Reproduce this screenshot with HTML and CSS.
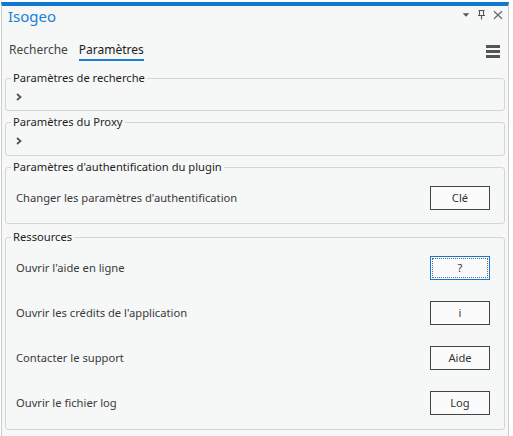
FILE: index.html
```html
<!DOCTYPE html>
<html lang="fr">
<head>
<meta charset="utf-8">
<title>Isogeo</title>
<link rel="stylesheet" href="styles.css">
</head>
<body>
<div class="panel">
  <div class="titlebar">
    <span class="title">Isogeo</span>
    <div class="win-icons">
      <svg class="ico ico-drop" width="10" height="10" viewBox="0 0 10 10"><path d="M1.7 3.3 L8.3 3.3 L5 6.7 Z" fill="#555"/></svg>
      <svg class="ico ico-pin" width="10" height="10" viewBox="0 0 10 10"><path d="M2.5 0.5 H8.5 M3.5 0.5 V5.5 M7.5 0.5 V5.5 M2 5.5 H9 M5.5 5.5 V9.5" stroke="#555" stroke-width="1.1" fill="none"/></svg>
      <svg class="ico ico-close" width="10" height="10" viewBox="0 0 10 10"><path d="M1 1.2 L9 8.8 M9 1.2 L1 8.8" stroke="#666" stroke-width="1.2" fill="none"/></svg>
    </div>
  </div>
  <div class="tabbar">
    <div class="tabs">
      <span class="tab">Recherche</span>
      <span class="tab active">Paramètres</span>
    </div>
    <svg class="menu" width="14" height="13" viewBox="0 0 14 13"><path d="M0 1.5 H14 M0 6.5 H14 M0 11.5 H14" stroke="#555" stroke-width="3"/></svg>
  </div>

  <fieldset class="group collapsed g1">
    <legend>Paramètres de recherche</legend>
    <svg class="chev" width="6" height="8" viewBox="0 0 6 8"><path d="M1 1 L4.5 4 L1 7" stroke="#555" stroke-width="1.8" fill="none"/></svg>
  </fieldset>

  <fieldset class="group collapsed g2">
    <legend>Paramètres du Proxy</legend>
    <svg class="chev" width="6" height="8" viewBox="0 0 6 8"><path d="M1 1 L4.5 4 L1 7" stroke="#555" stroke-width="1.8" fill="none"/></svg>
  </fieldset>

  <fieldset class="group g3">
    <legend>Paramètres d'authentification du plugin</legend>
    <div class="row"><span class="label">Changer les paramètres d'authentification</span><button class="btn">Clé</button></div>
  </fieldset>

  <fieldset class="group g4">
    <legend>Ressources</legend>
    <div class="row"><span class="label">Ouvrir l'aide en ligne</span><button class="btn focus">?</button></div>
    <div class="row"><span class="label">Ouvrir les crédits de l'application</span><button class="btn">i</button></div>
    <div class="row"><span class="label">Contacter le support</span><button class="btn">Aide</button></div>
    <div class="row"><span class="label">Ouvrir le fichier log</span><button class="btn">Log</button></div>
  </fieldset>
</div>
</body>
</html>
```

FILE: styles.css
```css
html, body {
  margin: 0;
  padding: 0;
  background: #ffffff;
  height: 100%;
  overflow: hidden;
}
body {
  font-family: "Noto Sans", "Open Sans", sans-serif;
  font-size: 11.2px;
  color: #333;
  padding-top: 2px;
  padding-left: 1px;
  box-sizing: border-box;
}
.panel {
  width: 502px;
  height: 440px;
  background: #f6f7f7;
  border-top: 4px solid #0f78d0;
  border-left: 1px solid #cbcbcb;
  border-right: 1px solid #cbcbcb;
  padding: 0 2px;
}
.titlebar {
  display: flex;
  justify-content: space-between;
  align-items: flex-start;
  height: 34px;
}
.title {
  color: #1a7fd4;
  font-size: 15px;
  line-height: 20px;
  margin-left: 4px;
}
.win-icons {
  display: flex;
  align-items: center;
  margin-top: 4px;
  margin-right: 3px;
}
.ico-pin {
  margin-left: 5px;
}
.ico-close {
  margin-left: 7px;
}
.tabbar {
  display: flex;
  justify-content: space-between;
  align-items: flex-start;
  height: 30px;
  padding: 2px 6px 0 5px;
  box-sizing: border-box;
}
.tabs {
  display: flex;
  gap: 11px;
}
.tab {
  font-size: 12px;
  color: #444;
  line-height: 16px;
  padding-bottom: 1px;
  border-bottom: 2px solid transparent;
}
.tab.active {
  color: #222;
  border-bottom-color: #1a7fd4;
}
.menu {
  display: block;
  margin-top: 3px;
}
.group {
  margin: 0 0 0 1px;
  border: 1px solid #d5d5d5;
  border-radius: 3px;
  padding: 0 14px 0 10px;
  min-width: 0;
  width: 500px;
  box-sizing: border-box;
}
.group legend {
  padding: 0 2px;
  margin-left: -5px;
  color: #1e1e1e;
  font-size: 11.2px;
  line-height: 16px;
}
.g1 {
  height: 41px;
}
.g2 {
  height: 42px;
  margin-top: 3px;
}
.g3 {
  margin-top: 3px;
  padding-bottom: 3px;
}
.g4 {
  margin-top: 5px;
  padding-bottom: 4px;
}
.chev {
  display: block;
  margin-top: 7px;
}
.row {
  display: flex;
  justify-content: space-between;
  align-items: center;
  height: 45px;
}
.label {
  color: #3a3a3a;
}
.btn {
  width: 60px;
  height: 24px;
  background: #fbfbfb;
  border: 1px solid #444;
  font-family: inherit;
  font-size: 11.2px;
  color: #333;
  padding: 0;
}
.btn.focus {
  border-color: #0f78d0;
  outline: 1px dotted #666;
  outline-offset: -3px;
}
```
